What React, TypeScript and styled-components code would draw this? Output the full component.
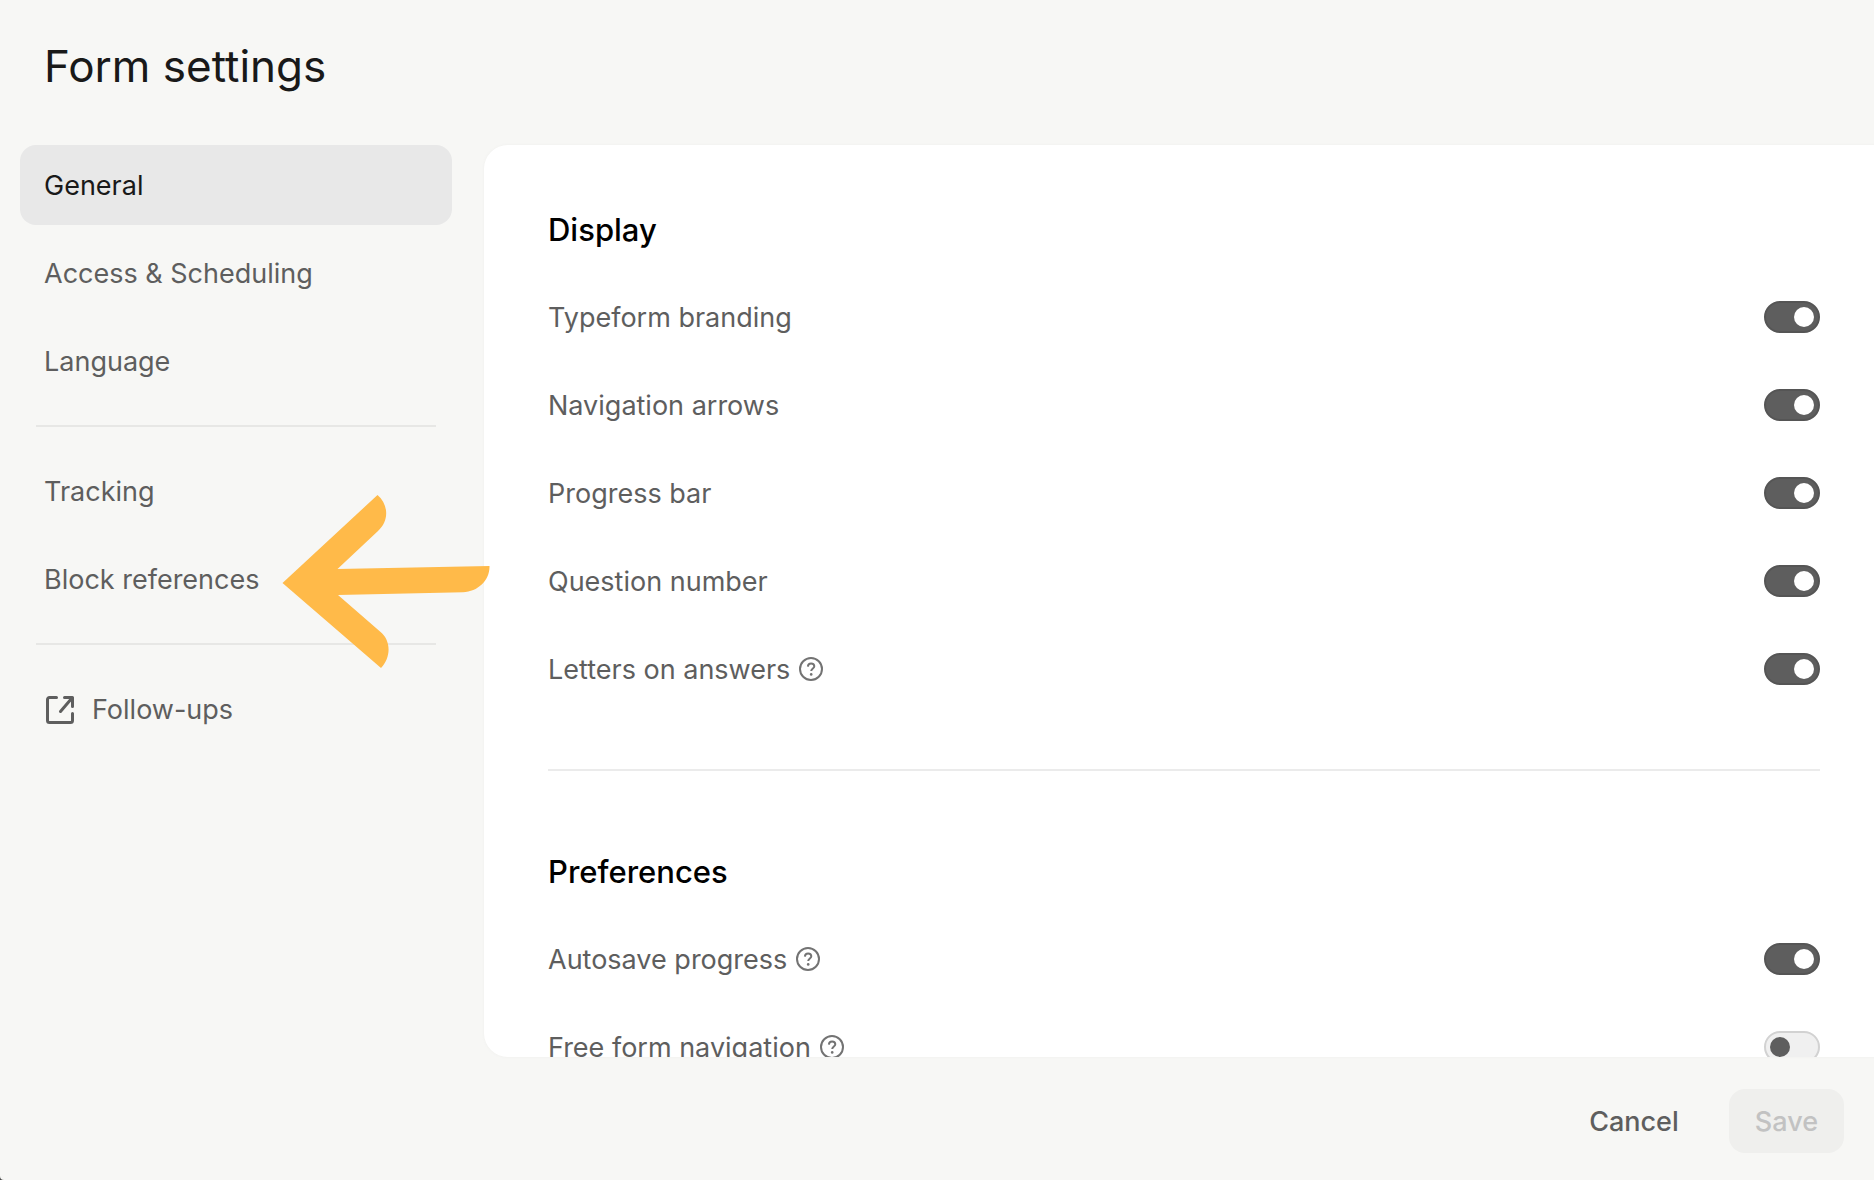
import React, { useId, useState } from "react";
import styled, { createGlobalStyle } from "styled-components";

const GlobalStyle = createGlobalStyle`
  *, *::before, *::after { box-sizing: border-box; }
  body {
    margin: 0;
    background: #4a4a4a;
    color: #5e5e5e;
    font-family: Inter, "Liberation Sans", sans-serif;
    font-size: 27px;
    line-height: 40px;
  }
`;

const Page = styled.div`
  display: flex;
  flex-direction: column;
  height: 100vh;
  background: #f7f7f5;
  border-bottom-left-radius: 4px;
`;

const Header = styled.header`
  padding: 34px 44px 47px;
`;

const Title = styled.h1`
  margin: 0;
  color: #191919;
  font-size: 44px;
  font-weight: 400;
  line-height: 64px;
`;

const Body = styled.div`
  display: flex;
  flex: 1;
  min-height: 0;
`;

const Sidebar = styled.nav`
  flex: none;
  width: 484px;
  padding: 0 32px 0 20px;
`;

const NavGroup = styled.ul`
  display: flex;
  flex-direction: column;
  gap: 8px;
  margin: 0;
  padding: 0;
  list-style: none;

  & + & {
    margin-top: 24px;
  }

  & + &::before {
    content: "";
    height: 2px;
    margin: 0 16px 16px;
    background: #e7e7e5;
  }
`;

const NavItem = styled.li`
  position: relative;
`;

const NavLink = styled.a<{ $active?: boolean }>`
  display: flex;
  align-items: center;
  gap: 16px;
  height: 80px;
  padding: 2px 24px 0;
  border-radius: 16px;
  background: ${(p) => (p.$active ? "#e8e8e8" : "transparent")};
  color: ${(p) => (p.$active ? "#191919" : "#5e5e5e")};
  text-decoration: none;
`;

const Pointer = styled.svg`
  position: absolute;
  z-index: 1;
  top: -49px;
  left: 260px;
  pointer-events: none;
`;

const Panel = styled.main`
  flex: 1;
  min-width: 0;
  padding: 64px 54px 0 64px;
  overflow: hidden;
  border-radius: 24px 0 0 24px;
  background: #fff;
  box-shadow: 0 0 2px 1px #f3f3f1;
`;

const Section = styled.section`
  display: flex;
  flex-direction: column;
  gap: 48px;

  & + & {
    margin-top: 80px;
    padding-top: 80px;
    border-top: 2px solid #ebebeb;
  }
`;

const SectionTitle = styled.h2`
  height: 40px;
  margin: 0;
  padding-top: 1px;
  color: #000;
  font-size: 31px;
  font-weight: 500;
  line-height: 40px;
`;

const Row = styled.div`
  display: flex;
  align-items: center;
  justify-content: space-between;
  height: 40px;
`;

const RowLabel = styled.div`
  display: flex;
  align-items: center;
  gap: 8px;
`;

const RowText = styled.label`
  padding-top: 2px;
`;

const HelpButton = styled.button`
  display: flex;
  padding: 0;
  border: 0;
  background: none;
  color: #737373;
`;

const Switch = styled.input`
  appearance: none;
  display: flex;
  align-items: center;
  width: 56px;
  height: 32px;
  margin: 0;
  padding: 0 4px;
  border: 2px solid #d2d2d2;
  border-radius: 16px;
  background: #f0f0f0;

  &::before {
    content: "";
    width: 20px;
    height: 20px;
    border-radius: 50%;
    background: #5e5e5e;
  }

  &:checked {
    justify-content: flex-end;
    border-color: #555;
    background: #5e5e5e;
  }

  &:checked::before {
    background: #fff;
  }
`;

const Footer = styled.footer`
  display: flex;
  justify-content: flex-end;
  gap: 24px;
  padding: 32px 30px 27px;
`;

const Button = styled.button`
  height: 64px;
  padding: 2px 26px 0;
  border: 0;
  border-radius: 16px;
  background: transparent;
  color: #5e5e5e;
  font: inherit;
  font-weight: 500;

  &:disabled {
    background: #efefed;
    color: #c2c2c2;
  }
`;

function ExternalIcon() {
  return (
    <svg width="32" height="32" viewBox="0 0 32 32" fill="none" stroke="currentColor" strokeWidth="3" strokeLinecap="round" strokeLinejoin="round" aria-hidden="true">
      <path d="M12.5 3.5H5.500a2 2 0 0 0-2 2v21a2 2 0 0 0 2 2h21a2 2 0 0 0 2-2v-7" />
      <path d="M20.500 3.500h8v9M28 4 16.500 17.500" />
    </svg>
  );
}

function HelpIcon() {
  return (
    <svg width="26" height="26" viewBox="0 0 26 26" fill="none" stroke="currentColor" strokeWidth="2" aria-hidden="true">
      <circle cx="13" cy="13" r="11" />
      <path d="M9.900 10.600c.1-2 1.400-3.200 3.200-3.200s3.200 1.100 3.200 2.800c0 2.100-3.100 2.400-3.100 4.800" />
      <circle cx="13.200" cy="18.400" r="1.300" fill="currentColor" stroke="none" />
    </svg>
  );
}

function ArrowPointer() {
  return (
    <Pointer width="212" height="182" viewBox="0 0 212 182" aria-hidden="true">
      <path
        fill="#ffba49"
        d="M2.500 93 97.500 5C109 15 109 31 98 41L57.500 79 209.500 76C210 90 198 102 183 102.200L58 105 100 141.500C111 150 111.500 167 101 178Z"
      />
    </Pointer>
  );
}

interface SettingProps {
  label: string;
  help?: boolean;
  initial?: boolean;
}

function Setting({ label, help, initial = true }: SettingProps) {
  const id = useId();
  const [on, setOn] = useState(initial);
  return (
    <Row>
      <RowLabel>
        <RowText htmlFor={id}>{label}</RowText>
        {help && (
          <HelpButton type="button" aria-label={`About ${label}`}>
            <HelpIcon />
          </HelpButton>
        )}
      </RowLabel>
      <Switch id={id} type="checkbox" role="switch" checked={on} onChange={(e) => setOn(e.target.checked)} />
    </Row>
  );
}

export default function App() {
  return (
    <>
      <GlobalStyle />
      <Page>
        <Header>
          <Title>Form settings</Title>
        </Header>
        <Body>
          <Sidebar>
            <NavGroup>
              <NavItem><NavLink href="#general" $active aria-current="page">General</NavLink></NavItem>
              <NavItem><NavLink href="#access">Access &amp; Scheduling</NavLink></NavItem>
              <NavItem><NavLink href="#language">Language</NavLink></NavItem>
            </NavGroup>
            <NavGroup>
              <NavItem><NavLink href="#tracking">Tracking</NavLink></NavItem>
              <NavItem>
                <NavLink href="#block-references">Block references</NavLink>
                <ArrowPointer />
              </NavItem>
            </NavGroup>
            <NavGroup>
              <NavItem>
                <NavLink href="#follow-ups">
                  <ExternalIcon />
                  Follow-ups
                </NavLink>
              </NavItem>
            </NavGroup>
          </Sidebar>
          <Panel>
            <Section>
              <SectionTitle>Display</SectionTitle>
              <Setting label="Typeform branding" />
              <Setting label="Navigation arrows" />
              <Setting label="Progress bar" />
              <Setting label="Question number" />
              <Setting label="Letters on answers" help />
            </Section>
            <Section>
              <SectionTitle>Preferences</SectionTitle>
              <Setting label="Autosave progress" help />
              <Setting label="Free form navigation" help initial={false} />
            </Section>
          </Panel>
        </Body>
        <Footer>
          <Button type="button">Cancel</Button>
          <Button type="button" disabled>Save</Button>
        </Footer>
      </Page>
    </>
  );
}
